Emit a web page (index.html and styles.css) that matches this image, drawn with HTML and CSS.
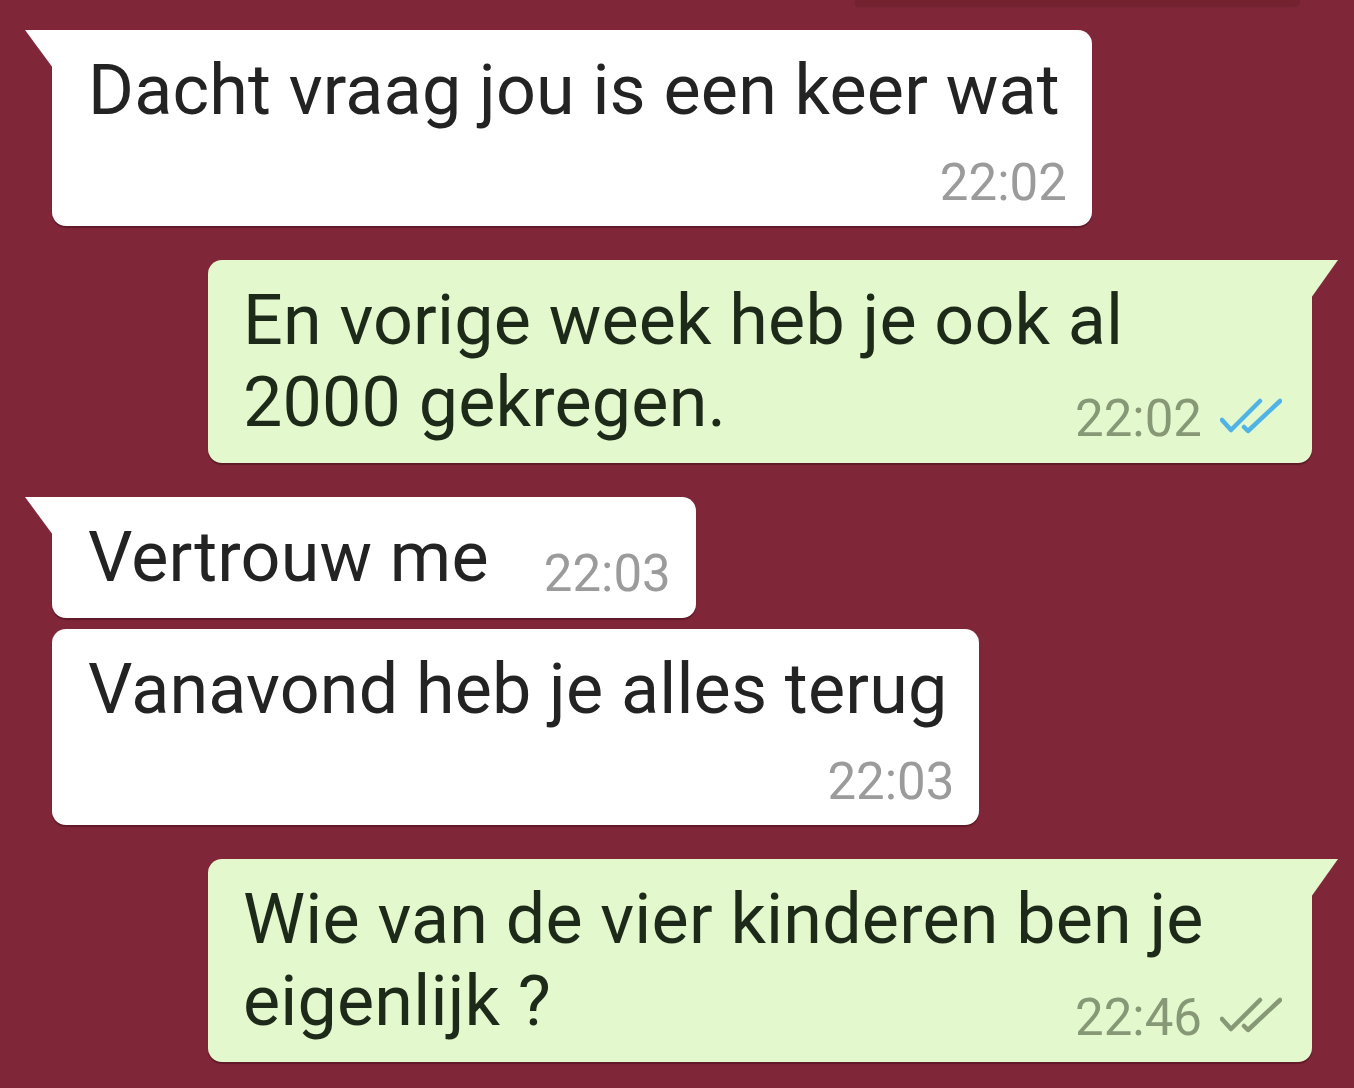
FILE: index.html
```html
<!DOCTYPE html>
<html lang="nl">
<head>
<meta charset="utf-8">
<title>Chat</title>
<link rel="stylesheet" href="styles.css">
</head>
<body>
<div class="chat">
  <div class="ghost"></div>

  <div class="bubble in tail">
    <div class="line">Dacht vraag jou is een keer wat</div>
    <div class="meta-row"><span class="time">22:02</span></div>
  </div>

  <div class="bubble out tail">
    <div class="line">En vorige week heb je ook al</div>
    <div class="row">
      <span class="line">2000 gekregen.</span>
      <span class="meta"><span class="time">22:02</span>
        <svg class="ticks read" viewBox="0 0 62 36" width="62" height="36"><path d="M2 22 L11 32 L40 3 M24 29 L28 33 L60 3"/></svg>
      </span>
    </div>
  </div>

  <div class="bubble in tail">
    <div class="row inline">
      <span class="line">Vertrouw me</span>
      <span class="meta"><span class="time">22:03</span></span>
    </div>
  </div>

  <div class="bubble in cont">
    <div class="line">Vanavond heb je alles terug</div>
    <div class="meta-row"><span class="time">22:03</span></div>
  </div>

  <div class="bubble out tail">
    <div class="line">Wie van de vier kinderen ben je</div>
    <div class="row">
      <span class="line">eigenlijk ?</span>
      <span class="meta"><span class="time">22:46</span>
        <svg class="ticks" viewBox="0 0 62 36" width="62" height="36"><path d="M2 22 L11 32 L40 3 M24 29 L28 33 L60 3"/></svg>
      </span>
    </div>
  </div>
</div>
</body>
</html>
```

FILE: styles.css
```css
html, body {
  margin: 0;
  padding: 0;
}

body {
  background: #7f2739;
  font-family: Roboto, "Liberation Sans", Arial, sans-serif;
  width: 1354px;
  height: 1088px;
  overflow: hidden;
}

.chat {
  display: flex;
  flex-direction: column;
  padding: 0 42px 0 52px;
}

.ghost {
  align-self: flex-end;
  width: 445px;
  height: 6px;
  margin-right: 12px;
  background: #74222f;
  border-radius: 0 0 10px 4px;
  box-shadow: 0 1px 2px rgba(0, 0, 0, 0.12);
}

.bubble {
  position: relative;
  border-radius: 14px;
  padding: 19px 32px 20px 36px;
  margin-top: 34px;
  box-shadow: 0 2px 1px rgba(40, 0, 10, 0.35);
  white-space: nowrap;
}

.ghost + .bubble {
  margin-top: 24px;
}

.bubble.cont {
  margin-top: 11px;
}

.in {
  align-self: flex-start;
  background: #ffffff;
  color: #232323;
}

.out {
  align-self: flex-end;
  width: 1039px;
  background: #e3f8cc;
  color: #1d2a19;
  padding: 19px 30px 20px 35px;
}

.in.tail {
  border-top-left-radius: 0;
}

.out.tail {
  border-top-right-radius: 0;
}

.in.tail::before {
  content: "";
  position: absolute;
  left: -27px;
  top: 0;
  width: 28px;
  height: 38px;
  background: #ffffff;
  clip-path: polygon(0 0, 100% 0, 100% 100%);
}

.out.tail::before {
  content: "";
  position: absolute;
  right: -26px;
  top: 0;
  width: 27px;
  height: 38px;
  background: #e3f8cc;
  clip-path: polygon(0 0, 100% 0, 0 100%);
}

.line {
  display: block;
  font-size: 70px;
  line-height: 82px;
  letter-spacing: 0.2px;
}

.row {
  display: flex;
  justify-content: space-between;
  align-items: flex-end;
}

.row.inline {
  justify-content: flex-start;
  gap: 55px;
}

.meta {
  display: flex;
  align-items: center;
  gap: 18px;
  margin-bottom: -6px;
}

.in .meta {
  margin-right: -7px;
}

.meta-row {
  display: flex;
  justify-content: flex-end;
  margin-top: 22px;
  margin-bottom: -7px;
  margin-right: -7px;
}

.time {
  font-size: 51px;
  line-height: 60px;
  color: #9b9b9b;
}

.out .time {
  color: #879877;
}

.ticks {
  display: block;
  margin-top: -6px;
}

.ticks path {
  fill: none;
  stroke: #879877;
  stroke-width: 4.5;
  stroke-linecap: round;
  stroke-linejoin: round;
}

.ticks.read path {
  stroke: #4fb3e6;
}
```
